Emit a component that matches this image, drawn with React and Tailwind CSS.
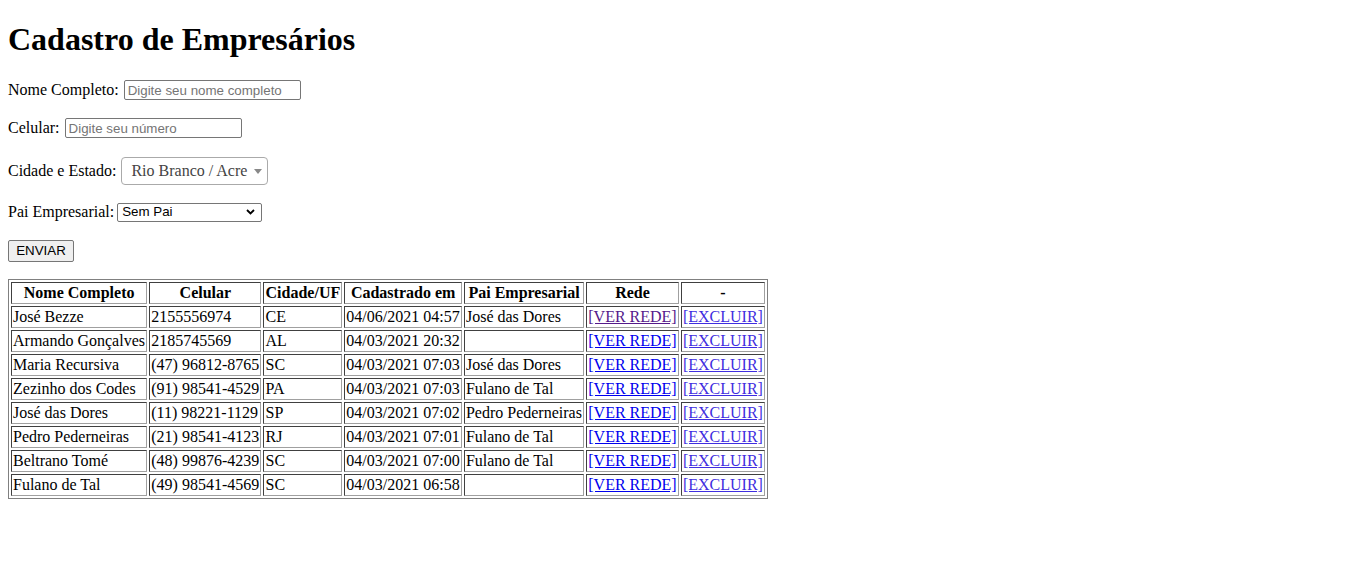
const empresarios = [
  { nome: "José Bezze", celular: "2155556974", uf: "CE", data: "04/06/2021 04:57", pai: "José das Dores", visitado: true },
  { nome: "Armando Gonçalves", celular: "2185745569", uf: "AL", data: "04/03/2021 20:32", pai: "" },
  { nome: "Maria Recursiva", celular: "(47) 96812-8765", uf: "SC", data: "04/03/2021 07:03", pai: "José das Dores" },
  { nome: "Zezinho dos Codes", celular: "(91) 98541-4529", uf: "PA", data: "04/03/2021 07:03", pai: "Fulano de Tal" },
  { nome: "José das Dores", celular: "(11) 98221-1129", uf: "SP", data: "04/03/2021 07:02", pai: "Pedro Pederneiras" },
  { nome: "Pedro Pederneiras", celular: "(21) 98541-4123", uf: "RJ", data: "04/03/2021 07:01", pai: "Fulano de Tal" },
  { nome: "Beltrano Tomé", celular: "(48) 99876-4239", uf: "SC", data: "04/03/2021 07:00", pai: "Fulano de Tal" },
  { nome: "Fulano de Tal", celular: "(49) 98541-4569", uf: "SC", data: "04/03/2021 06:58", pai: "" },
];

const colunas = ["Nome Completo", "Celular", "Cidade/UF", "Cadastrado em", "Pai Empresarial", "Rede", "-"];

const cell = "border border-t-[#404040] border-l-[#404040] border-b-[#a0a0a0] border-r-[#a0a0a0] p-[1px] leading-[18px] whitespace-nowrap";

function Field({ label, children }) {
  return (
    <div className="flex items-center gap-[5px]">
      <span>{label}</span>
      {children}
    </div>
  );
}

export default function App() {
  return (
    <div className="min-h-screen bg-white px-2 pt-[21px] font-['Liberation_Serif',serif] text-[16px] text-black">
      <h1 className="text-[32px] font-bold leading-[37px]">Cadastro de Empresários</h1>

      <form className="mt-[20px]" onSubmit={(e) => e.preventDefault()}>
        <div className="h-[21px]">
          <Field label="Nome Completo:">
            <input
              placeholder="Digite seu nome completo"
              className="h-[20px] w-[177px] rounded-[2px] border border-[#767676] px-[3px] font-['Liberation_Sans',sans-serif] text-[13.33px] placeholder:text-[#757575]"
            />
          </Field>
        </div>

        <div className="mt-[17px] h-[21px]">
          <Field label="Celular:">
            <input
              placeholder="Digite seu número"
              className="h-[20px] w-[177px] rounded-[2px] border border-[#767676] px-[3px] font-['Liberation_Sans',sans-serif] text-[13.33px] placeholder:text-[#757575]"
            />
          </Field>
        </div>

        <div className="mt-[20px] h-[30px]">
          <Field label="Cidade e Estado:">
            <div className="flex h-[28px] w-[147px] items-center justify-between rounded-[4px] border border-[#aaaaaa] pl-[9px] pr-[5px] text-[#444444]">
              <span>Rio Branco / Acre</span>
              <svg width="8" height="5" viewBox="0 0 8 5">
                <polygon points="0,0 8,0 4,5" fill="#888888" />
              </svg>
            </div>
          </Field>
        </div>

        <div className="mt-[13px] h-[19px]">
          <Field label="Pai Empresarial:">
            <div className="-ml-[2px] flex h-[19px] w-[145px] items-center justify-between rounded-[2px] border border-[#767676] pl-[4px] pr-[6px] font-['Liberation_Sans',sans-serif] text-[13.33px]">
              <span>Sem Pai</span>
              <svg width="9" height="6" viewBox="0 0 9 6">
                <polyline points="1,1 4.5,4.5 8,1" fill="none" stroke="#000" strokeWidth="1.8" />
              </svg>
            </div>
          </Field>
        </div>

        <button
          type="submit"
          className="mt-[21px] h-[22px] w-[66px] rounded-[2px] border border-[#767676] bg-[#efefef] font-['Liberation_Sans',sans-serif] text-[13.33px]"
        >
          ENVIAR
        </button>
      </form>

      <table className="mt-[17px] w-[760px] border-separate border-spacing-[2px] border border-[#808080]">
        <thead>
          <tr>
            {colunas.map((c) => (
              <th key={c} className={`${cell} font-bold text-center`}>
                {c}
              </th>
            ))}
          </tr>
        </thead>
        <tbody>
          {empresarios.map((e) => (
            <tr key={e.nome}>
              <td className={cell}>{e.nome}</td>
              <td className={cell}>{e.celular}</td>
              <td className={cell}>{e.uf}</td>
              <td className={cell}>{e.data}</td>
              <td className={cell}>{e.pai}</td>
              <td className={`${cell} text-center`}>
                <a href="#" className={`underline ${e.visitado ? "text-[#551a8b]" : "text-[#0000ee]"}`}>
                  [VER REDE]
                </a>
              </td>
              <td className={`${cell} text-center`}>
                <a href="#" className="text-[#3f2ee0] underline">
                  [EXCLUIR]
                </a>
              </td>
            </tr>
          ))}
        </tbody>
      </table>
    </div>
  );
}
